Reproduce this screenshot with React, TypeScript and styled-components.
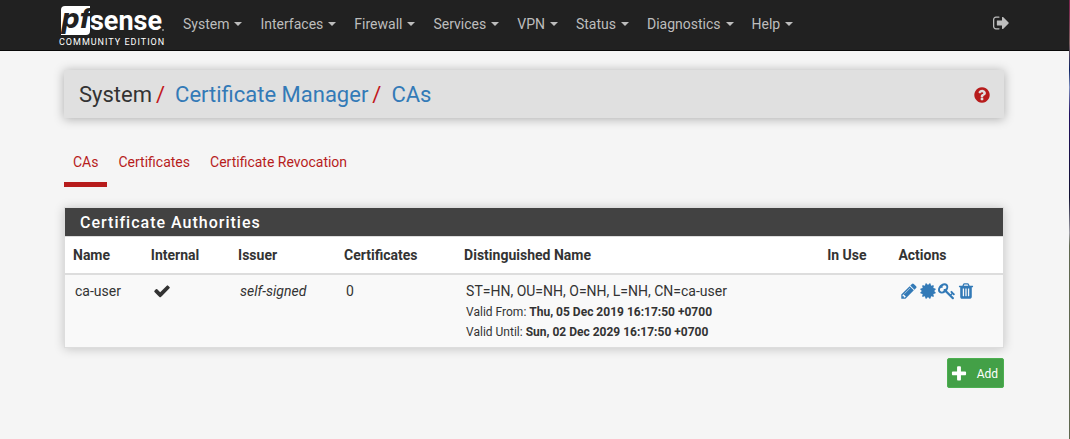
import React from "react";
import styled, { createGlobalStyle } from "styled-components";

const GlobalStyle = createGlobalStyle`
  * { box-sizing: border-box; }
  body {
    margin: 0;
    background: #f5f5f5;
    color: #333;
    font: 14px/20px Roboto, "Liberation Sans", sans-serif;
  }
  a { text-decoration: none; }
`;

const paths = {
  signOut:
    "M640 1440q0 4 1 20t.5 26.5-3 23.5-10 19.5-20.5 6.5h-320q-119 0-203.5-84.5t-84.5-203.5v-704q0-119 84.5-203.5t203.5-84.5h320q13 0 22.5 9.5t9.5 22.5q0 4 1 20t.5 26.5-3 23.5-10 19.5-20.5 6.5h-320q-66 0-113 47t-47 113v704q0 66 47 113t113 47h312l11.5 1 11.5 3 8 5.5 7 9 2 13.5zm928-544q0 26-19 45l-544 544q-19 19-45 19t-45-19-19-45v-288h-448q-26 0-45-19t-19-45v-384q0-26 19-45t45-19h448v-288q0-26 19-45t45-19 45 19l544 544q19 19 19 45z",
  help:
    "M1024 1376v-192q0-14-9-23t-23-9h-192q-14 0-23 9t-9 23v192q0 14 9 23t23 9h192q14 0 23-9t9-23zm256-672q0-88-55.5-163t-138.5-116-170-41q-243 0-371 213-15 24 8 42l132 100q7 6 19 6 16 0 25-12 53-68 86-92 34-24 86-24 48 0 85.5 26t37.5 59q0 38-20 61t-68 45q-63 28-115.5 86.5t-52.5 125.5v36q0 14 9 23t23 9h192q14 0 23-9t9-23q0-19 21.5-49.5t54.5-49.5q32-18 49-28.5t46-35 44.5-48 28-60.5 12.5-81zm384 192q0 209-103 385.5t-279.5 279.5-385.5 103-385.5-103-279.5-279.5-103-385.5 103-385.5 279.5-279.5 385.5-103 385.5 103 279.5 279.5 103 385.5z",
  check:
    "M1671 566q0 40-28 68l-724 724-136 136q-28 28-68 28t-68-28l-136-136-362-362q-28-28-28-68t28-68l136-136q28-28 68-28t68 28l294 295 656-657q28-28 68-28t68 28l136 136q28 28 28 68z",
  pencil:
    "M491 1536l91-91-235-235-91 91v107h128v128h107zm523-928q0-22-22-22-10 0-17 7l-542 542q-7 7-7 17 0 22 22 22 10 0 17-7l542-542q7-7 7-17zm-54-192l416 416-832 832h-416v-416zm683 96q0 53-37 90l-166 166-416-416 166-165q36-38 90-38 53 0 91 38l235 234q37 39 37 91z",
  certificate:
    "M1504 896l138 135q30 28 20 70-12 41-52 51l-188 48 53 186q12 41-19 70-29 31-70 19l-186-53-48 188q-10 40-51 52-12 2-19 2-31 0-51-22l-135-138-135 138q-28 30-70 20-41-11-51-52l-48-188-186 53q-41 12-70-19-31-29-19-70l53-186-188-48q-40-10-52-51-10-42 20-70l138-135-138-135q-30-28-20-70 12-41 52-51l188-48-53-186q-12-41 19-70 29-31 70-19l186 53 48-188q10-41 51-51 41-12 70 19l135 139 135-139q29-30 70-19 41 10 51 51l48 188 186-53q41-12 70 19 31 29 19 70l-53 186 188 48q40 10 52 51 10 42-20 70z",
  key:
    "M832 512q0-80-56-136t-136-56-136 56-56 136q0 42 19 83-41-19-83-19-80 0-136 56t-56 136 56 136 136 56 136-56 56-136q0-42-19-83 41 19 83 19 80 0 136-56t56-136zm851 704q0 17-49 66t-66 49q-9 0-28.5-16t-36.5-33-38.5-40-24.5-26l-96 96 220 220q28 28 28 68 0 42-39 81t-81 39q-40 0-68-28l-671-671q-176 131-365 131-163 0-265.5-102.5t-102.5-265.5q0-160 95-313t248-248 313-95q163 0 265.5 102.5t102.5 265.5q0 189-131 365l355 355 96-96q-3-3-26-24.5t-40-38.5-33-36.5-16-28.5q0-17 49-66t66-49q13 0 23 10 6 6 46 44.5t82 79.5 86.5 86 73 78 28.5 41z",
  trash:
    "M704 1376v-704q0-14-9-23t-23-9h-64q-14 0-23 9t-9 23v704q0 14 9 23t23 9h64q14 0 23-9t9-23zm256 0v-704q0-14-9-23t-23-9h-64q-14 0-23 9t-9 23v704q0 14 9 23t23 9h64q14 0 23-9t9-23zm256 0v-704q0-14-9-23t-23-9h-64q-14 0-23 9t-9 23v704q0 14 9 23t23 9h64q14 0 23-9t9-23zm-544-992h448l-48-117q-7-9-17-11h-317q-10 2-17 11zm928 32v64q0 14-9 23t-23 9h-96v948q0 83-47 143.5t-113 60.5h-832q-66 0-113-58.5t-47-141.5v-952h-96q-14 0-23-9t-9-23v-64q0-14 9-23t23-9h309l70-167q15-37 54-63t79-26h320q40 0 79 26t54 63l70 167h309q14 0 23 9t9 23z",
  plus:
    "M1600 736v192q0 40-28 68t-68 28h-416v416q0 40-28 68t-68 28h-192q-40 0-68-28t-28-68v-416h-416q-40 0-68-28t-28-68v-192q0-40 28-68t68-28h416v-416q0-40 28-68t68-28h192q40 0 68 28t28 68v416h416q40 0 68 28t28 68z",
};

const IconSvg = styled.svg`
  display: block;
  flex: none;
  fill: currentColor;
`;

function Icon({ name, size = 18 }: { name: keyof typeof paths; size?: number }) {
  return (
    <IconSvg width={size} height={size} viewBox="0 0 1792 1792" aria-hidden="true">
      <path d={paths[name]} />
    </IconSvg>
  );
}

/* The window's right edge shows a sliver of the desktop behind it. */
const Shell = styled.div`
  min-height: 100vh;
  border-right: 1px solid #606850;
  border-image: linear-gradient(
      #802850 2%, #806060 10%, #0a2060 16%, #8090c0 20%, #201060 26%,
      #101030 45%, #a0a0a8 53%, #606850 56%
    ) 1;
`;

const TopBar = styled.header`
  background: #212121;
  border-bottom: 1px solid #080808;
`;

const TopInner = styled.div`
  display: flex;
  align-items: flex-start;
  height: 50px;
  padding: 0 58px 0 59px;
`;

const Brand = styled.a`
  display: block;
  width: 106px;
  padding-top: 2px;
  margin-right: 9px;
  color: #fff;
`;

const Logo = styled.svg`
  display: block;
`;

const Edition = styled.span`
  display: block;
  font-size: 9px;
  line-height: 10px;
  letter-spacing: 1px;
  white-space: nowrap;
`;

const Menu = styled.nav`
  display: flex;
  flex: 1;
`;

const MenuButton = styled.button`
  display: flex;
  align-items: center;
  gap: 5px;
  height: 48px;
  padding: 0 9px;
  border: 0;
  background: none;
  color: #bdbdbd;
  font: inherit;

  &::after {
    content: "";
    border: 4px solid transparent;
    border-top-color: currentColor;
    border-bottom: 0;
  }
`;

const LogoutLink = styled.a`
  padding-top: 14px;
  color: #bdbdbd;
`;

const Page = styled.main`
  padding: 19px 65px 50px 64px;
`;

const Heading = styled.div`
  display: flex;
  align-items: center;
  justify-content: space-between;
  height: 48px;
  padding: 2px 13px 0 15px;
  background: #e0e0e0;
  box-shadow: 0 1px 10px rgba(0, 0, 0, 0.3);
`;

const Crumbs = styled.ol`
  display: flex;
  margin: 0;
  padding: 0;
  list-style: none;
  font-size: 22px;
  line-height: 24px;

  li + li::before {
    content: "/";
    padding: 0 10px 0 4px;
    color: #c2181c;
  }
`;

const BlueLink = styled.a`
  color: #337ab7;
`;

const HelpLink = styled.a`
  color: #b71c1c;
`;

const Tabs = styled.nav`
  display: flex;
  margin-top: 29px;
`;

const Tab = styled.a<{ $active?: boolean }>`
  padding: 5px 9px 10px;
  margin-right: 2px;
  border-bottom: 5px solid ${(p) => (p.$active ? "#b71c1c" : "transparent")};
  color: #b71c1c;
`;

const Panel = styled.section`
  margin-top: 20px;
  background: #fff;
  border: 1px solid #ddd;
  box-shadow: 0 1px 10px rgba(0, 0, 0, 0.2);
`;

const PanelTitle = styled.h2`
  margin: 0;
  padding: 5px 15px 3px;
  background: #424242;
  border-bottom: 1px solid #ddd;
  color: #fff;
  font-size: 16px;
  font-weight: 500;
  line-height: 20px;
  letter-spacing: 1px;
`;

const Table = styled.table`
  width: 100%;
  table-layout: fixed;
  border-collapse: collapse;
  text-align: left;

  th {
    height: 37px;
    padding: 0 8px;
    border-bottom: 2px solid #ddd;
  }

  td {
    padding: 6px 10px 5px;
    background: #f9f9f9;
    vertical-align: top;
  }
`;

const Col = styled.col<{ $share: number }>`
  width: ${(p) => p.$share}%;
`;

const Validity = styled.div`
  padding-top: 1px;
  font-size: 12px;
  line-height: 20px;

  & + & {
    padding-top: 0;
  }
`;

const IconRow = styled.div`
  display: flex;
  align-items: center;
  height: 20px;
`;

const Actions = styled(IconRow)`
  gap: 1px;
`;

const Footer = styled.div`
  display: flex;
  justify-content: flex-end;
  margin-top: 10px;
`;

const AddButton = styled.button`
  display: flex;
  align-items: center;
  gap: 9px;
  height: 30px;
  padding: 1px 5px 0 2px;
  border: 1px solid #4caf50;
  border-radius: 2px;
  background: #43a047;
  color: #fff;
  font: 12px/18px Roboto, "Liberation Sans", sans-serif;
`;

const menus = ["System", "Interfaces", "Firewall", "Services", "VPN", "Status", "Diagnostics", "Help"];
const columns: [string, number][] = [
  ["Name", 8.3],
  ["Internal", 9.3],
  ["Issuer", 11.3],
  ["Certificates", 12.8],
  ["Distinguished Name", 38.7],
  ["In Use", 7.6],
  ["Actions", 12],
];

export default function App() {
  return (
    <Shell>
      <GlobalStyle />
      <TopBar>
        <TopInner>
          <Brand href="#" aria-label="pfSense Community Edition">
            <Logo width="106" height="35" viewBox="0 2 106 35">
              <path d="M6 6h25v25q0 4-4 4H2V10q0-4 4-4z" fill="#fff" />
              <text x="2" y="28" fontFamily="DejaVu Sans" fontWeight="700" fontStyle="italic" fontSize="26" fill="#212121">pf</text>
              <text x="31" y="30" fontFamily="Roboto" fontWeight="700" fontSize="27" fill="#fff">sense</text>
              <circle cx="104" cy="30" r="1" fill="#999" />
            </Logo>
            <Edition>COMMUNITY EDITION</Edition>
          </Brand>
          <Menu aria-label="Main">
            {menus.map((m) => (
              <MenuButton key={m}>{m}</MenuButton>
            ))}
          </Menu>
          <LogoutLink href="#" aria-label="Logout">
            <Icon name="signOut" />
          </LogoutLink>
        </TopInner>
      </TopBar>
      <Page>
        <Heading>
          <Crumbs>
            <li>System</li>
            <li><BlueLink href="#">Certificate Manager</BlueLink></li>
            <li><BlueLink href="#">CAs</BlueLink></li>
          </Crumbs>
          <HelpLink href="#" aria-label="Help">
            <Icon name="help" />
          </HelpLink>
        </Heading>
        <Tabs aria-label="Certificate manager">
          <Tab href="#" $active>CAs</Tab>
          <Tab href="#">Certificates</Tab>
          <Tab href="#">Certificate Revocation</Tab>
        </Tabs>
        <Panel>
          <PanelTitle>Certificate Authorities</PanelTitle>
          <Table>
            <colgroup>
              {columns.map(([name, share]) => (
                <Col key={name} $share={share} />
              ))}
            </colgroup>
            <thead>
              <tr>
                {columns.map(([name]) => (
                  <th key={name} scope="col">{name}</th>
                ))}
              </tr>
            </thead>
            <tbody>
              <tr>
                <td>ca-user</td>
                <td><IconRow role="img" aria-label="Yes"><Icon name="check" /></IconRow></td>
                <td><i>self-signed</i></td>
                <td>0</td>
                <td>
                  ST=HN, OU=NH, O=NH, L=NH, CN=ca-user
                  <Validity>Valid From: <b>Thu, 05 Dec 2019 16:17:50 +0700</b></Validity>
                  <Validity>Valid Until: <b>Sun, 02 Dec 2029 16:17:50 +0700</b></Validity>
                </td>
                <td />
                <td>
                  <Actions>
                    <BlueLink href="#" aria-label="Edit CA"><Icon name="pencil" /></BlueLink>
                    <BlueLink href="#" aria-label="Export CA"><Icon name="certificate" /></BlueLink>
                    <BlueLink href="#" aria-label="Export key"><Icon name="key" /></BlueLink>
                    <BlueLink href="#" aria-label="Delete CA"><Icon name="trash" /></BlueLink>
                  </Actions>
                </td>
              </tr>
            </tbody>
          </Table>
        </Panel>
        <Footer>
          <AddButton>
            <Icon name="plus" />
            Add
          </AddButton>
        </Footer>
      </Page>
    </Shell>
  );
}
